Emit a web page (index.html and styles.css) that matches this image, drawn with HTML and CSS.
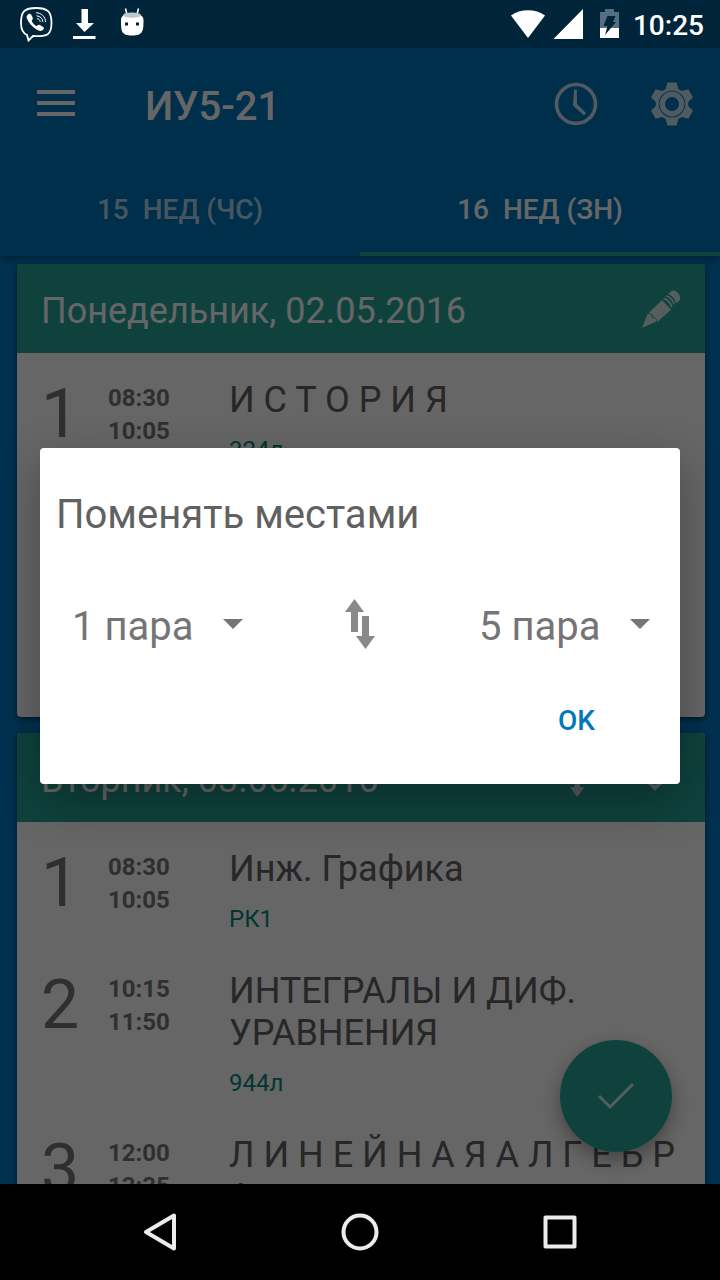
FILE: index.html
```html
<!DOCTYPE html>
<html lang="ru">
<head>
<meta charset="utf-8">
<meta name="viewport" content="width=device-width, initial-scale=1">
<title>ИУ5-21</title>
<link rel="stylesheet" href="styles.css">
</head>
<body>
<div class="screen">
  <div class="status">
    <div class="status-left">
      <svg width="36" height="36" viewBox="18 6 36 36" fill="none" stroke="#fff">
        <path d="M36 8C24.500 8 21 11.500 21 23c0 6.500 1.500 10 6 12l1.500 5.500 4.500-4.500c14.500 1 18.500-1.500 18.500-13C51.500 11.500 47.500 8 36 8z" stroke-width="1.800"/>
        <path d="M27.500 15c1.500-2 3-1.500 4 .2 1.800 3 1.500 3.800.4 5.300-.6 1 2.500 4.600 4.500 5.500 1.300-.6 2-1.800 3.400-1 4 2.300 5 2.500 3.500 4.500-2.300 2.300-4 1.500-7.500-.5-4-2.500-7.500-6.500-9-11-.4-1.200-.2-2 .7-3z" fill="#fff" stroke="none"/>
        <path d="M36 12.800c5.500 0 9.500 4 9.500 9.300M36.500 15.800c3.800.3 6.200 2.600 6.400 6.200M37 18.600c2 .2 3 1.400 3.200 3.200" stroke-width="1"/>
      </svg>
      <svg width="24" height="32" viewBox="72 8 24 32" fill="#fff">
        <path d="M81.500 9h6.500v14h6L84.500 32 76 23h5.500zM73 36h22.500v3H73z"/>
      </svg>
      <svg class="android" width="24" height="30" viewBox="120 7 24 30">
        <path d="M125.500 8.500l1.500 6M138.500 8.500l-1.500 6" stroke="#fff" stroke-width="1.600"/>
        <path d="M121 20c0-4.500 4-6.500 11-6.500s11.500 2 11.500 6.500c0 11-.5 15.500-11.500 15.500S121 31 121 20z" fill="#fff"/>
        <ellipse cx="132" cy="15.200" rx="9" ry="2.600" fill="#bcc8cc"/>
        <path d="M125 22.500h3v3h-3zM136 22.500h3v3h-3z" fill="#00243a"/>
      </svg>
    </div>
    <div class="status-right">
      <svg class="wifi" width="72" height="32" viewBox="511 8 72 32" fill="#fff">
        <path d="M511 15.500C520 8.500 536 8.500 545 15.500L528 38zM583 9v30h-29.500z"/>
      </svg>
      <svg class="battery" width="19" height="30" viewBox="600 9 19 30">
        <path d="M605 9h9v3h5v26h-19V12h5z" fill="#546f80"/>
        <path d="M600 28h19v10h-19z" fill="#fff"/>
        <path d="M607.500 16h8l-2.500 6h3l-11 13 2.500-9h-4z" fill="#00243a"/>
      </svg>
      <span>10:25</span>
    </div>
  </div>

  <div class="app">
    <header class="appbar">
      <div class="toolbar">
        <button class="icon-btn" aria-label="Меню">
          <svg width="38" height="28" viewBox="0 0 38 28" fill="#fff"><path d="M0 0h38v4H0zM0 11h38v4H0zM0 22h38v4H0z"/></svg>
        </button>
        <h1 class="group">ИУ5-21</h1>
        <button class="icon-btn faded" aria-label="Время">
          <svg width="44" height="44" viewBox="-22 -22 44 44"><circle r="19.500" fill="none" stroke="#fff" stroke-width="3.600"/><path d="M-2-14.500H.8L1 0 10 9 8 11.500-3 1.500z" fill="#fff"/></svg>
        </button>
        <button class="icon-btn faded" aria-label="Настройки">
          <svg width="44" height="44" viewBox="-22 -22 44 44" fill="none" stroke="#fff">
            <circle r="9.700" stroke-width="5.400"/>
            <circle r="14.800" stroke-width="3"/>
            <g fill="#fff" stroke="none">
              <path id="tooth" d="M-6.500-14.500-4.600-21.500H4.600L6.500-14.500 4-13.800H-4z"/>
              <use href="#tooth" transform="rotate(60)"/><use href="#tooth" transform="rotate(120)"/><use href="#tooth" transform="rotate(180)"/><use href="#tooth" transform="rotate(240)"/><use href="#tooth" transform="rotate(300)"/>
            </g>
          </svg>
        </button>
      </div>
      <nav class="tabs">
        <button class="tab">15&nbsp; НЕД (ЧС)</button>
        <button class="tab active">16&nbsp; НЕД (ЗН)</button>
      </nav>
    </header>

    <main class="days">
      <section class="card">
        <header class="day">
          <h2>Понедельник, 02.05.2016</h2>
          <button class="icon-btn faded" aria-label="Изменить">
            <svg width="38" height="38" viewBox="642 289 38 38" fill="#fff">
              <path d="M642 327l5.500-14c3.500-.5 4 1 4.500 3.500 2.500.5 4.500 1 4.500 4zM649 311.500l13-12.500 9 9.500-13.500 12.500c-.5-3-2-4.500-4.500-5-.2-2-1.500-3.300-3.500-3.500z"/>
              <path d="M663 298l1.300-1.300c4 1.200 7 4.500 8 8.500l-1.300 1.800c-1-4.500-4-7.800-8-9zM665.500 295.600l1.300-1.300c4 1.200 7 4.300 8 8.300l-1.300 1.500c-1-4.500-4-7.500-8-8.500zM668 293.200l3-2.700c3-4 12 4 8.500 9l-3.500 2.700c-1-4.500-4-8-8-9z"/>
            </svg>
          </button>
        </header>
        <div class="lessons first">
          <article class="lesson">
            <div class="num">1</div>
            <div class="time">08:30<br>10:05</div>
            <div class="subject"><h3>И С Т О Р И Я</h3><p>324л</p></div>
          </article>
        </div>
      </section>

      <section class="card">
        <header class="day">
          <h2>Вторник, 03.05.2016</h2>
          <button class="icon-btn faded" aria-label="Поменять местами">
            <svg width="26" height="38" viewBox="0 0 30 50" fill="#fff"><path d="M9.500 0 19 13h-6v20H6V13H0zM17 17h7v20h6l-9.500 13L11 37h6z"/></svg>
          </button>
          <button class="icon-btn faded check" aria-label="Готово">
            <svg width="38" height="28" viewBox="0 0 38 28" fill="none" stroke="#fff" stroke-width="4"><path d="M4 15l9 9L35 3"/></svg>
          </button>
        </header>
        <div class="lessons">
          <article class="lesson">
            <div class="num">1</div>
            <div class="time">08:30<br>10:05</div>
            <div class="subject"><h3>Инж. Графика</h3><p>РК1</p></div>
          </article>
          <article class="lesson">
            <div class="num">2</div>
            <div class="time">10:15<br>11:50</div>
            <div class="subject"><h3>ИНТЕГРАЛЫ И ДИФ. УРАВНЕНИЯ</h3><p>944л</p></div>
          </article>
          <article class="lesson">
            <div class="num">3</div>
            <div class="time">12:00<br>13:35</div>
            <div class="subject"><h3>Л И Н Е Й Н А Я А Л Г Е Б Р А</h3></div>
          </article>
        </div>
      </section>
    </main>

    <button class="fab" aria-label="Готово">
      <svg width="38" height="28" viewBox="0 0 38 28" fill="none" stroke="#fff" stroke-width="3"><path d="M2 14l11 11L36 2"/></svg>
    </button>
  </div>

  <nav class="navbar">
    <button class="icon-btn" aria-label="Назад">
      <svg width="40" height="40" viewBox="0 0 40 40" fill="none" stroke="#ececec" stroke-width="4" stroke-linejoin="round"><path d="M34 3.500v33L6 20z"/></svg>
    </button>
    <button class="icon-btn" aria-label="Домой">
      <svg width="40" height="40" viewBox="0 0 40 40" fill="none" stroke="#ececec" stroke-width="4"><circle cx="20" cy="20" r="16.500"/></svg>
    </button>
    <button class="icon-btn" aria-label="Обзор">
      <svg width="40" height="40" viewBox="0 0 40 40" fill="none" stroke="#ececec" stroke-width="4" stroke-linejoin="round"><path d="M5.500 5.500h29v29h-29z"/></svg>
    </button>
  </nav>

  <div class="scrim">
    <div class="dialog" role="dialog" aria-modal="true" aria-labelledby="dialog-title">
      <h2 id="dialog-title">Поменять местами</h2>
      <div class="swap">
        <div class="spinner">
          <select aria-label="Первая пара"><option>1 пара</option></select>
          <svg width="20" height="10" viewBox="0 0 20 10" fill="#757575"><path d="M0 0h20L10 10z"/></svg>
        </div>
        <svg width="32" height="50" viewBox="0 0 32 50" fill="#898989"><path d="M9.500 0 19 13h-6v20H6V13H0zM17 17h7v20h6l-9.500 13L11 37h6z"/></svg>
        <div class="spinner">
          <select aria-label="Вторая пара"><option>5 пара</option></select>
          <svg width="20" height="10" viewBox="0 0 20 10" fill="#757575"><path d="M0 0h20L10 10z"/></svg>
        </div>
      </div>
      <div class="actions"><button class="ok">OK</button></div>
    </div>
  </div>
</div>
</body>
</html>
```

FILE: styles.css
```css
* {
  box-sizing: border-box;
  margin: 0;
}

body {
  font-family: Roboto, "Noto Sans", sans-serif;
  background: #000;
}

button {
  border: 0;
  padding: 0;
  background: none;
  font: inherit;
  color: inherit;
}

svg {
  display: block;
}

.screen {
  position: relative;
  display: flex;
  flex-direction: column;
  height: 100vh;
  overflow: hidden;
}

/* System status bar */
.status {
  position: relative;
  z-index: 3;
  flex: none;
  display: flex;
  justify-content: space-between;
  height: 48px;
  padding: 0 16px 0 18px;
  background: #00243a;
  color: #fff;
  font-size: 28px;
  font-weight: 500;
}

.status-left,
.status-right {
  display: flex;
  align-items: center;
}

.status-left {
  gap: 18px;
}

.android {
  margin: 0 0 4px 6px;
}

.battery {
  margin: 0 14px 0 17px;
}

.status span {
  padding-top: 2px;
}

/* Application */
.app {
  position: relative;
  flex: 1;
  min-height: 0;
  display: flex;
  flex-direction: column;
  background: #007bc6;
}

.appbar {
  position: relative;
  z-index: 1;
  flex: none;
  background: #0277bd;
  color: #fff;
  box-shadow: 0 2px 8px rgba(0, 0, 0, 0.4);
}

.toolbar {
  display: flex;
  align-items: center;
  height: 112px;
  padding: 0 26px 0 37px;
}

.group {
  flex: 1;
  margin-left: 70px;
  padding-top: 4px;
  font-size: 40px;
  font-weight: 500;
}

.faded {
  opacity: 0.78;
}

.toolbar .faded + .faded {
  margin-left: 52px;
}

.tabs {
  display: flex;
}

.tab {
  flex: 1;
  height: 96px;
  padding-top: 6px;
  border-bottom: 4px solid transparent;
  font-size: 28px;
  font-weight: 500;
  color: rgba(255, 255, 255, 0.7);
}

.tab.active {
  color: #fff;
  border-color: #26a69a;
}

.days {
  flex: 1;
  min-height: 0;
  display: flex;
  flex-direction: column;
  gap: 16px;
  padding: 8px 15px 0 17px;
  overflow: hidden;
}

.card {
  flex: none;
  border-radius: 4px;
  background: #fff;
  box-shadow: 0 2px 6px rgba(0, 0, 0, 0.5);
}

.day {
  display: flex;
  align-items: center;
  height: 89px;
  padding: 4px 25px 0 24px;
  border-radius: 4px 4px 0 0;
  background: #26a69a;
  color: #fff;
}

.day h2 {
  flex: 1;
  font-size: 36px;
  font-weight: 400;
}

.day .icon-btn {
  margin-bottom: 4px;
}

.day .check {
  margin-left: 56px;
}

.lessons.first {
  min-height: 364px;
}

.lesson {
  display: grid;
  grid-template-columns: 67px 121px 1fr;
  padding: 21px 24px 11px;
}

.num {
  height: 80px;
  font-size: 68px;
  line-height: 80px;
  color: #757575;
}

.time {
  padding-top: 8px;
  font-size: 24px;
  font-weight: 700;
  line-height: 33px;
  color: #757575;
}

.subject {
  padding-top: 5px;
}

.subject h3 {
  font-size: 36px;
  font-weight: 400;
  line-height: 42px;
  color: #616161;
}

.subject p {
  margin-top: 15px;
  font-size: 24px;
  line-height: 28px;
  color: #00897b;
}

.fab {
  position: absolute;
  right: 48px;
  bottom: 32px;
  z-index: 1;
  display: grid;
  place-items: center;
  width: 112px;
  height: 112px;
  border-radius: 50%;
  background: #26a69a;
  box-shadow: 0 8px 20px rgba(0, 0, 0, 0.35);
}

.fab svg {
  opacity: 0.78;
}

/* System navigation bar */
.navbar {
  position: relative;
  z-index: 3;
  flex: none;
  display: flex;
  justify-content: center;
  align-items: center;
  gap: 160px;
  height: 96px;
  background: #000;
}

/* Dialog */
.scrim {
  position: absolute;
  inset: 0;
  z-index: 2;
  display: flex;
  align-items: center;
  padding: 48px 40px 96px;
  background: rgba(0, 0, 0, 0.6);
}

.dialog {
  flex: 1;
  padding: 41px 16px 40px;
  border-radius: 4px;
  background: #fff;
  box-shadow: 0 16px 48px rgba(0, 0, 0, 0.3);
}

.dialog h2 {
  font-size: 40px;
  font-weight: 400;
  line-height: 52px;
  color: #616161;
}

.swap {
  display: flex;
  justify-content: space-between;
  align-items: center;
  height: 64px;
  margin-top: 51px;
  padding: 0 14px 0 16px;
}

.spinner {
  display: grid;
  grid-template-columns: 151px 20px;
  align-items: center;
}

.spinner select {
  grid-area: 1 / 1 / 2 / 3;
  appearance: none;
  width: 100%;
  height: 64px;
  padding: 4px 0 0;
  border: 0;
  background: none;
  font: 400 40px Roboto, "Noto Sans", sans-serif;
  color: #757575;
}

.spinner svg {
  grid-area: 1 / 2;
  pointer-events: none;
}

.actions {
  display: flex;
  justify-content: flex-end;
  margin-top: 40px;
  padding-right: 69px;
}

.ok {
  height: 48px;
  font-size: 28px;
  font-weight: 500;
  color: #0277bd;
}
```
